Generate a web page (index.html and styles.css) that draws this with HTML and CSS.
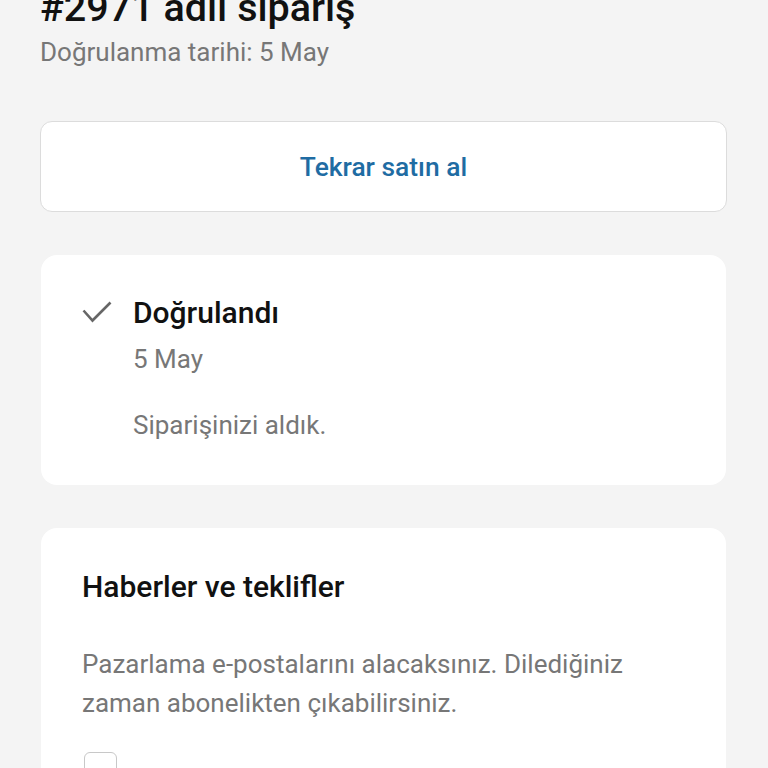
FILE: index.html
```html
<!DOCTYPE html>
<html lang="tr">
<head>
    <meta charset="UTF-8">
    <title>Sipariş</title>
    <link rel="stylesheet" href="styles.css">
</head>
<body>
<div class="page">
    <h1 class="title">#2971 adlı sipariş</h1>
    <p class="subtitle">Doğrulanma tarihi: 5 May</p>

    <button class="btn-again">Tekrar satın al</button>

    <div class="card status">
        <svg class="check" width="30" height="22" viewBox="0 0 30 22">
            <polyline points="1.5,9.5 10.5,19.5 28.5,1.5" fill="none" stroke="#666" stroke-width="2.6"/>
        </svg>
        <div class="status-body">
            <div class="status-title">Doğrulandı</div>
            <div class="status-date">5 May</div>
            <div class="status-text">Siparişinizi aldık.</div>
        </div>
    </div>

    <div class="card news">
        <div class="news-title">Haberler ve teklifler</div>
        <p class="news-text">Pazarlama e-postalarını alacaksınız. Dilediğiniz zaman abonelikten çıkabilirsiniz.</p>
        <span class="box"></span>
    </div>
</div>
</body>
</html>
```

FILE: styles.css
```css
body {
    margin: 0;
    background: #f4f4f4;
    font-family: Roboto, "Liberation Sans", sans-serif;
    color: #111;
}
.page {
    padding: 0 41px 0 40px;
}
.title {
    margin: -16px 0 0;
    font-size: 39.5px;
    font-weight: 500;
    line-height: 1.2;
}
.subtitle {
    margin: 5px 0 0;
    font-size: 26px;
    line-height: 32px;
    color: #777;
}
.btn-again {
    display: block;
    width: 100%;
    height: 91px;
    margin-top: 53px;
    background: #fff;
    border: 1px solid #dcdcdc;
    border-radius: 12px;
    font-family: inherit;
    font-size: 26.4px;
    font-weight: 500;
    color: #1f6ca3;
}
.card {
    background: #fff;
    border-radius: 16px;
    margin: 43px 1px 0;
}
.status {
    display: flex;
    padding: 40px 41px 0;
    height: 230px;
    box-sizing: border-box;
}
.check {
    margin: 6px 21px 0 0;
    flex: none;
}
.status-title {
    font-size: 30px;
    font-weight: 500;
    line-height: 36px;
}
.status-date {
    margin-top: 12px;
    font-size: 26px;
    line-height: 32px;
    color: #777;
}
.status-text {
    margin-top: 34px;
    font-size: 26px;
    line-height: 32px;
    color: #777;
}
.news {
    padding: 41px 41px 0;
    height: 240px;
}
.news-title {
    font-size: 30px;
    font-weight: 500;
    line-height: 36px;
}
.news-text {
    margin: 40px 0 0;
    font-size: 26px;
    line-height: 39px;
    color: #777;
}
.box {
    display: block;
    margin: 29px 0 0 2px;
    width: 31px;
    height: 31px;
    border: 1px solid #c8c8c8;
    border-radius: 6px;
}
```
